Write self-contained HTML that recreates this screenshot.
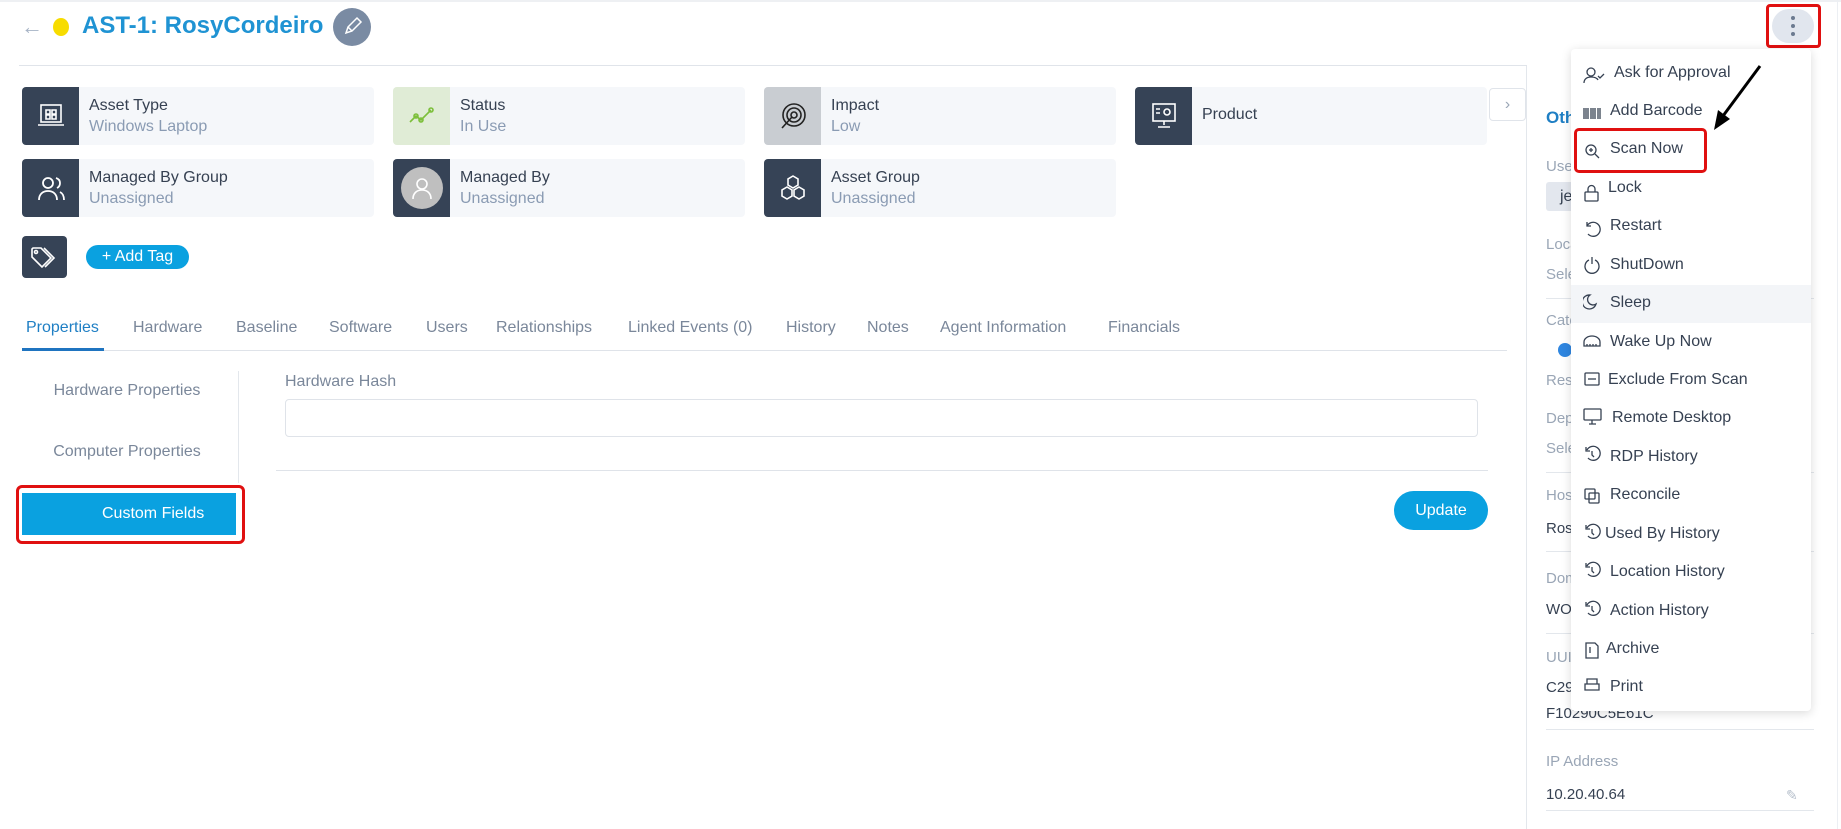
<!DOCTYPE html>
<html><head><meta charset="utf-8"><style>
*{box-sizing:border-box;margin:0;padding:0}
body{width:1841px;height:829px;overflow:hidden;background:#fff;font-family:"Liberation Sans",sans-serif;position:relative;color:#364152}
.a{position:absolute}
.card{position:absolute;height:58px;width:352px;background:#f5f7fa;border-radius:4px;overflow:hidden}
.card .ic{position:absolute;left:0;top:0;width:57px;height:58px;background:#364356;display:flex;align-items:center;justify-content:center}
.card .t{position:absolute;left:67px;top:10px;font-size:16px;color:#364152}
.card .s{position:absolute;left:67px;top:31px;font-size:16px;color:#8a9bb3}
.tab{position:absolute;top:319px;font-size:16px;color:#7a879a}
.mi{position:absolute;left:1610px;font-size:16px;color:#364152}
.rp{position:absolute;left:1546px;font-size:15px;color:#9aa6b6}
.rv{position:absolute;left:1546px;font-size:15px;color:#364152}
.hr{position:absolute;left:1546px;width:268px;height:1px;background:#e3e7ec}
</style></head><body>
<div class="a" style="left:0;top:0;width:1841px;height:2px;background:#eef0f3"></div>
<div class="a" style="left:21px;top:14px;font-size:22px;color:#a7b4c6">←</div>
<div class="a" style="left:53px;top:18px;width:16px;height:18px;border-radius:50%;background:#f7dc00"></div>
<div class="a" style="left:82px;top:12px;font-size:24px;color:#1f93d3;font-weight:bold">AST-1: RosyCordeiro</div>
<div class="a" style="left:333px;top:8px;width:38px;height:38px;border-radius:50%;background:#7a8ba3"><svg width="38" height="38"><path d="M13 25l2-6 9-9 4 4-9 9z M15 19l4 4" stroke="#fff" stroke-width="1.5" fill="none"/></svg></div>
<div class="a" style="left:19px;top:65px;width:1508px;height:1px;background:#e0e4ea"></div>
<div class="a" style="left:1772px;top:9px;width:42px;height:34px;border-radius:17px;background:#e1e6ee"></div>
<div class="a" style="left:1791px;top:16px;width:4px;height:4px;border-radius:50%;background:#6b7a90;box-shadow:0 8px 0 #6b7a90,0 16px 0 #6b7a90"></div>
<div class="a" style="left:1766px;top:4px;width:55px;height:44px;border:3px solid #e01010;border-radius:4px"></div>

<div class="card" style="left:22px;top:87px"><div class="ic"><svg width="30" height="28" fill="none" stroke="#fff" stroke-width="1.6"><rect x="5" y="3" width="20" height="17"/><path d="M2 23h26M10 8h4v4h-4zM16 8h4v4h-4zM10 13h4v4h-4zM16 13h4v4h-4z"/></svg></div><div class="t">Asset Type</div><div class="s">Windows Laptop</div></div>
<div class="card" style="left:393px;top:87px"><div class="ic" style="background:#e0ecd6"><svg width="30" height="20" fill="none" stroke="#7cbf3a" stroke-width="1.6"><path d="M3 16l6-6 5 4 10-10"/><circle cx="9" cy="10" r="2"/><circle cx="14" cy="14" r="2"/><circle cx="24" cy="4" r="2"/></svg></div><div class="t">Status</div><div class="s">In Use</div></div>
<div class="card" style="left:764px;top:87px"><div class="ic" style="background:#c9cdd2"><svg width="30" height="30" fill="none" stroke="#222" stroke-width="1.6"><circle cx="16" cy="14" r="11"/><circle cx="16" cy="14" r="7"/><circle cx="16" cy="14" r="3"/><path d="M4 27l10-11"/></svg></div><div class="t">Impact</div><div class="s">Low</div></div>
<div class="card" style="left:1135px;top:87px"><div class="ic"><svg width="30" height="30" fill="none" stroke="#fff" stroke-width="1.6"><rect x="4" y="3" width="22" height="17"/><path d="M15 20v4M9 26h12M7 8h4M7 12h4"/><circle cx="18" cy="11" r="3"/></svg></div><div class="t" style="top:19px">Product</div></div>
<div class="a" style="left:1489px;top:88px;width:37px;height:33px;border:1px solid #e0e4ea;border-radius:4px;color:#9aa6b6;text-align:center;line-height:31px;font-size:16px">›</div>

<div class="card" style="left:22px;top:159px"><div class="ic"><svg width="30" height="30" fill="none" stroke="#fff" stroke-width="1.8"><circle cx="12" cy="10" r="5"/><path d="M3 27c0-6 4-9 9-9s9 3 9 9M20 5c3 1 4 3 4 5s-1 4-3 5M24 19c2 1 4 3 4 8"/></svg></div><div class="t">Managed By Group</div><div class="s">Unassigned</div></div>
<div class="card" style="left:393px;top:159px"><div class="ic"><div style="width:42px;height:42px;border-radius:50%;background:#bfbfbf;display:flex;align-items:center;justify-content:center"><svg width="22" height="24" fill="none" stroke="#fff" stroke-width="1.6"><circle cx="11" cy="8" r="5"/><path d="M2 23c0-6 4-9 9-9s9 3 9 9"/></svg></div></div><div class="t">Managed By</div><div class="s">Unassigned</div></div>
<div class="card" style="left:764px;top:159px"><div class="ic"><svg width="30" height="30" fill="none" stroke="#fff" stroke-width="1.6"><path d="M15 3l5 3v6l-5 3-5-3V6zM9 14l5 3v6l-5 3-5-3v-6zM21 14l5 3v6l-5 3-5-3v-6z"/></svg></div><div class="t">Asset Group</div><div class="s">Unassigned</div></div>

<div class="a" style="left:22px;top:236px;width:45px;height:42px;background:#364356;border-radius:4px"><svg width="45" height="42" fill="none" stroke="#fff" stroke-width="1.6"><path d="M10 13v8l10 10 9-9-10-10h-8zM22 12l10 10-9 9"/><circle cx="14" cy="16" r="1.5"/></svg></div>
<div class="a" style="left:86px;top:245px;width:103px;height:24px;border-radius:12px;background:#0aa1e0;color:#fff;font-size:16px;line-height:24px;text-align:center">+ Add Tag</div>

<div class="tab" style="left:26px;color:#1f7fc4">Properties</div>
<div class="tab" style="left:133px">Hardware</div>
<div class="tab" style="left:236px">Baseline</div>
<div class="tab" style="left:329px">Software</div>
<div class="tab" style="left:426px">Users</div>
<div class="tab" style="left:496px">Relationships</div>
<div class="tab" style="left:628px">Linked Events (0)</div>
<div class="tab" style="left:786px">History</div>
<div class="tab" style="left:867px">Notes</div>
<div class="tab" style="left:940px">Agent Information</div>
<div class="tab" style="left:1108px">Financials</div>
<div class="a" style="left:22px;top:350px;width:1485px;height:1px;background:#dfe3e9"></div>
<div class="a" style="left:22px;top:348px;width:82px;height:3px;background:#1f74c0"></div>

<div class="a" style="left:238px;top:371px;width:1px;height:112px;background:#e3e7ec"></div>
<div class="a" style="left:22px;top:382px;width:210px;text-align:center;font-size:16px;color:#7a879a">Hardware Properties</div>
<div class="a" style="left:22px;top:443px;width:210px;text-align:center;font-size:16px;color:#7a879a">Computer Properties</div>
<div class="a" style="left:22px;top:493px;width:214px;height:42px;background:#0aa1e0;color:#fff;font-size:16px;line-height:42px;padding-left:80px">Custom Fields</div>
<div class="a" style="left:16px;top:485px;width:229px;height:59px;border:3px solid #e01010;border-radius:6px"></div>
<div class="a" style="left:285px;top:373px;font-size:16px;color:#7a879a">Hardware Hash</div>
<div class="a" style="left:285px;top:399px;width:1193px;height:38px;border:1px solid #dfe3e9;border-radius:4px"></div>
<div class="a" style="left:276px;top:470px;width:1212px;height:1px;background:#dfe3e9"></div>
<div class="a" style="left:1394px;top:491px;width:94px;height:39px;border-radius:20px;background:#0aa1e0;color:#fff;font-size:16px;line-height:39px;text-align:center">Update</div>

<div class="a" style="left:1526px;top:66px;width:1px;height:763px;background:#e3e7ec"></div>
<div class="a" style="left:1837px;top:0;width:1px;height:829px;background:#eceff3"></div>
<div class="a" style="left:1546px;top:108px;font-size:17px;color:#1f7fc4;font-weight:bold">Other</div>
<div class="rp" style="top:158px">User</div>
<div class="a" style="left:1546px;top:182px;width:60px;height:29px;background:#e3e7ee;border-radius:3px;font-size:16px;padding:6px 14px">je</div>
<div class="rp" style="top:236px">Location</div><div class="rp" style="top:266px">Select</div>
<div class="hr" style="top:298px"></div>
<div class="rp" style="top:312px">Category</div>
<div class="a" style="left:1558px;top:343px;width:14px;height:14px;border-radius:50%;background:#2f86e0"></div>
<div class="rp" style="top:372px">Res</div>
<div class="rp" style="top:410px">Dep</div><div class="rp" style="top:440px">Select</div>
<div class="hr" style="top:472px"></div>
<div class="rp" style="top:487px">Host</div><div class="rv" style="top:520px">Ros</div>
<div class="hr" style="top:551px"></div>
<div class="rp" style="top:570px">Domain</div><div class="rv" style="top:601px">WO</div>
<div class="hr" style="top:633px"></div>
<div class="rp" style="top:649px">UUID</div><div class="rv" style="top:679px">C29</div><div class="rv" style="top:705px">F10290C5E61C</div>
<div class="hr" style="top:729px"></div>
<div class="rp" style="top:753px">IP Address</div><div class="rv" style="top:786px">10.20.40.64</div>
<div class="a" style="left:1786px;top:787px;color:#b7c0cc;font-size:14px">✎</div>
<div class="hr" style="top:810px"></div>

<div class="a" style="left:1571px;top:49px;width:240px;height:662px;background:#fff;border-radius:4px;box-shadow:0 2px 10px rgba(0,0,0,.15)"></div>
<div class="a" style="left:1571px;top:285px;width:240px;height:38px;background:#f3f5f8"></div>
<div class="mi" style="top:64px;left:1614px">Ask for Approval</div>
<div class="mi" style="top:102px">Add Barcode</div>
<div class="mi" style="top:140px">Scan Now</div>
<div class="mi" style="top:179px;left:1608px">Lock</div>
<div class="mi" style="top:217px">Restart</div>
<div class="mi" style="top:256px">ShutDown</div>
<div class="mi" style="top:294px">Sleep</div>
<div class="mi" style="top:333px">Wake Up Now</div>
<div class="mi" style="top:371px;left:1608px">Exclude From Scan</div>
<div class="mi" style="top:409px;left:1612px">Remote Desktop</div>
<div class="mi" style="top:448px">RDP History</div>
<div class="mi" style="top:486px">Reconcile</div>
<div class="mi" style="top:525px;left:1605px">Used By History</div>
<div class="mi" style="top:563px">Location History</div>
<div class="mi" style="top:602px">Action History</div>
<div class="mi" style="top:640px;left:1606px">Archive</div>
<div class="mi" style="top:678px">Print</div>
<svg class="a" style="left:1583px;top:66px" width="24" height="640" fill="none" stroke="#364152" stroke-width="1.3">
<circle cx="8" cy="6" r="4"/><path d="M1 17c0-4 3-6 7-6s6 1 7 3M15 10l2 2 4-4"/>
<path d="M1 42v11M3 42v11M5 42v11M8 42v11M10 42v11M12 42v11M15 42v11M17 42v11"/>
<circle cx="8" cy="84" r="5"/><path d="M12 88l4 4M6 84h4M8 82v4"/>
<rect x="2" y="126" width="13" height="9" rx="1"/><path d="M5 126v-3a3.5 3.5 0 0 1 7 0v3"/>
<path d="M4 160a7 7 0 1 1 1 8M4 156v4h4"/>
<path d="M6 194a7 7 0 1 0 6 0M9 191v7"/>
<path d="M13 238a7 7 0 1 1-6-9 5 5 0 0 0 6 9z"/>
<path d="M1 280v-4a8 6 0 0 1 16 0v4zM4 280v-2M7 280v-2M10 280v-2M13 280v-2"/>
<rect x="2" y="307" width="14" height="12" rx="1"/><path d="M5 313h8"/>
<rect x="1" y="343" width="17" height="11" rx="1"/><path d="M6 358h7M9 354v4"/>
<path d="M4 384a7 7 0 1 1 1 8M3 381v4h4M9 385v4l2 2"/>
<rect x="2" y="423" width="10" height="10" rx="1"/><rect x="6" y="427" width="10" height="10" rx="1"/>
<path d="M4 462a7 7 0 1 1 1 8M3 459v4h4M9 463v4l2 2"/>
<path d="M4 500a7 7 0 1 1 1 8M3 497v4h4M9 501v4l2 2"/>
<path d="M4 539a7 7 0 1 1 1 8M3 536v4h4M9 540v4l2 2"/>
<path d="M3 577h9l3 3v12H3zM7 581v6"/>
<path d="M4 618v-5h10v5M2 618h14v6H2zM4 624h10"/>
</svg>
<div class="a" style="left:1574px;top:128px;width:133px;height:45px;border:3px solid #e01010;border-radius:5px"></div>
<svg class="a" style="left:1700px;top:60px" width="70" height="80"><path d="M60 6L20 60" stroke="#000" stroke-width="3"/><path d="M14 70l4-20 12 9z" fill="#000"/></svg>
</body></html>
